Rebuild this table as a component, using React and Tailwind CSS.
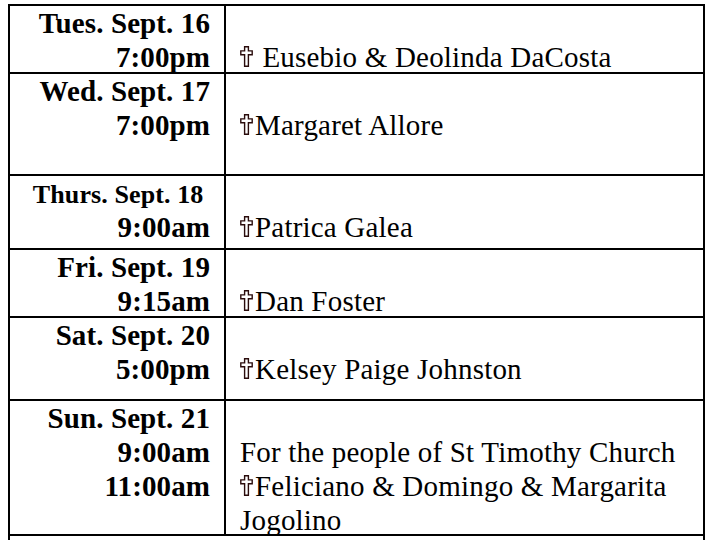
const serif = { fontFamily: '"Liberation Serif", "Times New Roman", serif' };

function Cross() {
  return (
    <svg width="13" height="21" viewBox="0 0 13 21" className="inline-block align-baseline mr-[2px]">
      <polygon
        points="4.6,0.8 8.4,0.8 8.4,4.9 12.2,4.9 12.2,8.7 8.4,8.7 8.4,20.2 4.6,20.2 4.6,8.7 0.8,8.7 0.8,4.9 4.6,4.9"
        fill="#fff"
        stroke="#2a0c0c"
        strokeWidth="1.4"
        strokeLinejoin="miter"
      />
    </svg>
  );
}

const rows = [
  { h: 'h-[68px]', left: ['Tues. Sept. 16', '7:00pm'], right: ['', <><Cross /> Eusebio &amp; Deolinda DaCosta</>] },
  { h: 'h-[102px]', left: ['Wed. Sept. 17', '7:00pm'], right: ['', <><Cross />Margaret Allore</>] },
  // the Thursday date line is set a size smaller in the bulletin
  { h: 'h-[74px]', left: [<span className="text-[26px]">Thurs. Sept. 18{'\u00a0'}</span>, '9:00am'], right: ['', <><Cross />Patrica Galea</>] },
  { h: 'h-[68px]', left: ['Fri. Sept. 19', '9:15am'], right: ['', <><Cross />Dan Foster</>] },
  { h: 'h-[83px]', left: ['Sat. Sept. 20', '5:00pm'], right: ['', <><Cross />Kelsey Paige Johnston</>] },
  {
    h: 'h-[135px]',
    left: ['Sun. Sept. 21', '9:00am', '11:00am'],
    right: ['', 'For the people of St Timothy Church', <><Cross />Feliciano &amp; Domingo &amp; Margarita</>, 'Jogolino'],
  },
];

export default function App() {
  return (
    <div className="min-h-screen bg-white text-black pt-[4px] pl-[8px]" style={serif}>
      <div className="w-[697px] border-x-2 border-t-2 border-black">
        {rows.map((row, i) => (
          <div key={i} className={`flex border-b-2 border-black ${row.h}`}>
            {/* date + time */}
            <div className="w-[216px] shrink-0 border-r-2 border-black pr-[14px] text-right font-bold text-[29px] leading-[34px] tracking-[0.1px]">
              {row.left.map((line, j) => (
                <div key={j} className="whitespace-nowrap h-[34px]">{line}</div>
              ))}
            </div>
            {/* intention */}
            <div className="flex-1 pl-[14px] text-[29px] leading-[34px] tracking-[0.2px]">
              {row.right.map((line, j) => (
                <div key={j} className="whitespace-nowrap h-[34px]">{line}</div>
              ))}
            </div>
          </div>
        ))}
        <div className="h-[40px]" />
      </div>
    </div>
  );
}
